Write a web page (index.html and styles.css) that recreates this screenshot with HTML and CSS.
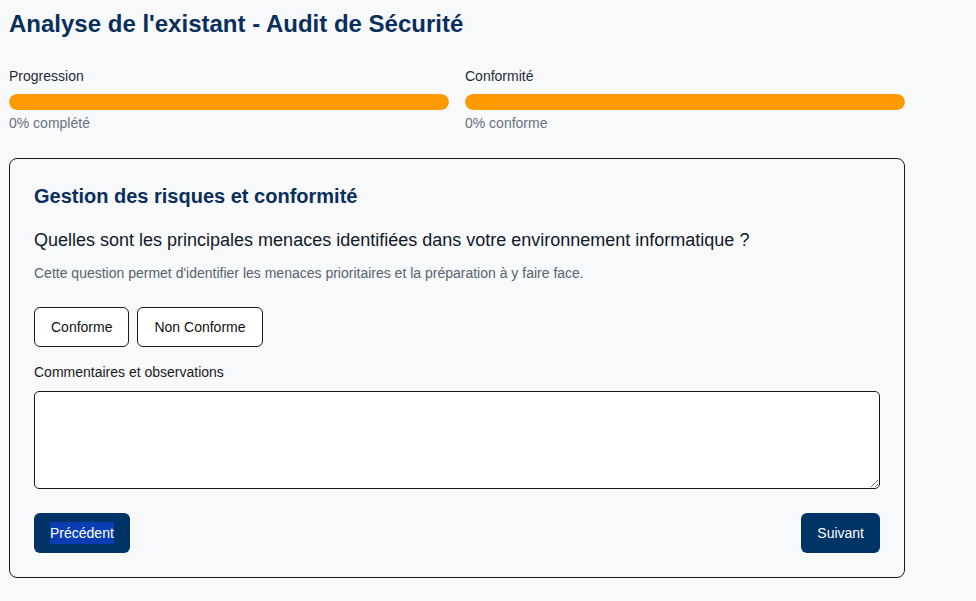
FILE: index.html
```html
<!DOCTYPE html>
<html lang="fr">
<head>
<meta charset="utf-8">
<title>Analyse de l'existant - Audit de Sécurité</title>
<link rel="stylesheet" href="styles.css">
</head>
<body>
<div class="page">
  <h1 class="title">Analyse de l'existant - Audit de Sécurité</h1>
  <div class="stats">
    <div class="stat">
      <div class="stat-label">Progression</div>
      <div class="bar"><div class="bar-fill" style="width: 100%"></div></div>
      <div class="stat-value">0% complété</div>
    </div>
    <div class="stat">
      <div class="stat-label">Conformité</div>
      <div class="bar"><div class="bar-fill" style="width: 100%"></div></div>
      <div class="stat-value">0% conforme</div>
    </div>
  </div>
  <section class="card">
    <h2 class="section-title">Gestion des risques et conformité</h2>
    <p class="question">Quelles sont les principales menaces identifiées dans votre environnement informatique ?</p>
    <p class="help">Cette question permet d'identifier les menaces prioritaires et la préparation à y faire face.</p>
    <div class="choices">
      <button class="choice">Conforme</button>
      <button class="choice">Non Conforme</button>
    </div>
    <label class="comment-label" for="comment">Commentaires et observations</label>
    <textarea id="comment" class="comment"></textarea>
    <div class="nav">
      <button class="nav-btn"><span class="selected">Précédent</span></button>
      <button class="nav-btn">Suivant</button>
    </div>
  </section>
</div>
</body>
</html>
```

FILE: styles.css
```css
html, body {
  margin: 0;
  padding: 0;
  background: #f8f9fb;
  font-family: "Liberation Sans", Arial, sans-serif;
}

.page {
  width: 896px;
  padding: 10px 9px 20px;
}

.title {
  margin: 0;
  font-size: 24px;
  font-weight: bold;
  color: #0a2f5c;
  line-height: 28px;
}

.stats {
  display: grid;
  grid-template-columns: 1fr 1fr;
  gap: 16px;
  margin-top: 30px;
}

.stat-label {
  font-size: 14px;
  line-height: 16px;
  color: #1f2a3a;
}

.bar {
  margin-top: 10px;
  height: 16px;
  border-radius: 8px;
  background: #e5e7eb;
  overflow: hidden;
}

.bar-fill {
  height: 100%;
  background: #ff9b00;
  border-radius: 8px;
}

.stat-value {
  margin-top: 5px;
  font-size: 14px;
  line-height: 16px;
  color: #6b7280;
}

.card {
  margin-top: 27px;
  border: 1px solid #1a1a1a;
  border-radius: 8px;
  padding: 26px 24px 24px;
  display: flex;
  flex-direction: column;
  align-items: flex-start;
}

.section-title {
  margin: 0;
  font-size: 20px;
  line-height: 23px;
  font-weight: bold;
  color: #0a2f5c;
}

.question {
  margin: 22px 0 0;
  font-size: 18px;
  line-height: 21px;
  color: #111827;
}

.help {
  margin: 14px 0 0;
  font-size: 14px;
  line-height: 16px;
  color: #5a6270;
}

.choices {
  display: flex;
  gap: 8px;
  margin-top: 26px;
}

.choice {
  height: 40px;
  padding: 0 16px;
  border: 1px solid #1a1a1a;
  border-radius: 6px;
  background: #ffffff;
  font-family: inherit;
  font-size: 14px;
  color: #111;
}

.comment-label {
  margin-top: 17px;
  font-size: 14px;
  line-height: 16px;
  color: #1a1a1a;
}

.comment {
  margin-top: 11px;
  width: 100%;
  height: 98px;
  box-sizing: border-box;
  border: 1px solid #1a1a1a;
  border-radius: 5px;
  background: #ffffff;
  font-family: inherit;
  font-size: 14px;
}

.nav {
  margin-top: 24px;
  width: 100%;
  display: flex;
  justify-content: space-between;
}

.nav-btn {
  height: 40px;
  padding: 0 16px;
  border: none;
  border-radius: 6px;
  background: #003366;
  color: #ffffff;
  font-family: inherit;
  font-size: 14px;
}

.selected {
  background: #0a3db3;
  padding: 3px 0;
}
```
